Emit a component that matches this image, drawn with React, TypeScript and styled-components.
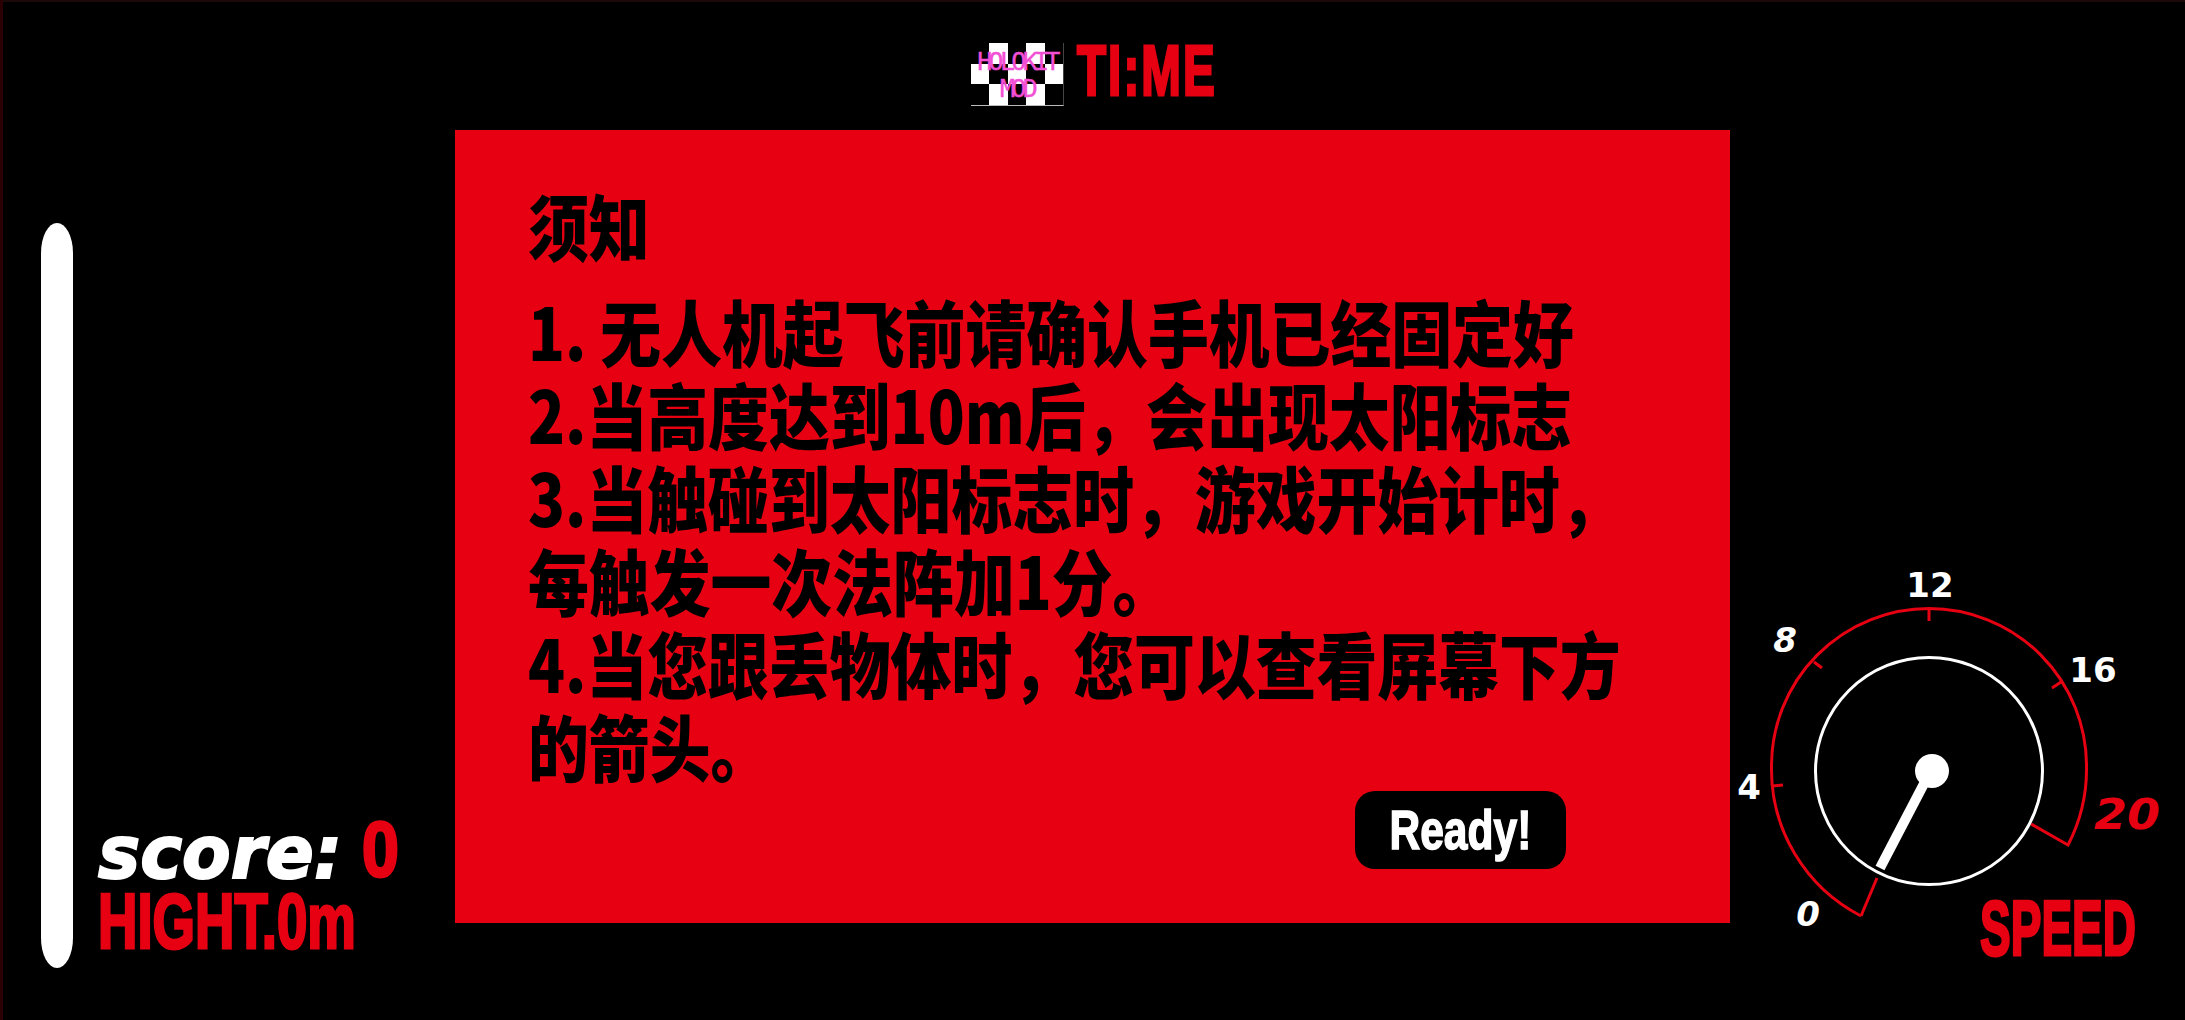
import React from "react";
import styled, { createGlobalStyle } from "styled-components";

const RED = "#e60012";

const GlobalStyle = createGlobalStyle`
  html, body {
    margin: 0;
    padding: 0;
    background: #000;
  }
`;

const Page = styled.main`
  width: 2185px;
  height: 1020px;
  background: #000;
  overflow: hidden;
  display: grid;
  grid-template-columns: 455px 1275px 455px;
  grid-template-rows: 130px 793px 97px;
  box-shadow: inset 3px 0 #2a0005, inset 0 2px #1c0a0a;
`;

const Header = styled.header`
  grid-column: 1 / 4;
  display: flex;
  justify-content: center;
  align-items: flex-start;
  padding: 43px 0 0 0;
  gap: 13px;
  transform: translateX(-1px);
`;

const Logo = styled.div`
  position: relative;
  width: 93px;
  height: 63px;
  display: grid;
  grid-template-columns: repeat(5, 1fr);
  grid-template-rows: repeat(3, 1fr);
  border-right: 1px solid #444;
  border-bottom: 1px solid #bbb;
  box-sizing: border-box;
`;

const Cell = styled.div<{ $white: boolean }>`
  background: ${({ $white }) => ($white ? "#fff" : "#000")};
`;

const LogoText = styled.div`
  position: absolute;
  top: 5px;
  left: 0;
  right: 0;
  text-align: center;
  color: #f24fd4;
  font: 25px/27px "DejaVu Sans Mono", monospace;
  -webkit-text-stroke: 0.4px #f24fd4;
  letter-spacing: -3.7px;
`;

const Time = styled.div`
  color: ${RED};
  font: 700 70px/56px "Liberation Sans", sans-serif;
  -webkit-text-stroke: 3px ${RED};
  letter-spacing: 3px;
  transform: scaleX(0.68);
  transform-origin: left top;
  width: 135px;
  white-space: nowrap;
`;

const LeftColumn = styled.aside`
  grid-row: 2 / 4;
  display: flex;
  align-items: flex-end;
  padding: 0 0 52px 41px;
  gap: 25px;
`;

const HeightBar = styled.div`
  width: 32px;
  height: 745px;
  border-radius: 16px / 30px;
  background: #fff;
  flex: none;
`;

const Stats = styled.div`
  display: flex;
  flex-direction: column;
  padding-bottom: 8px;
`;

const ScoreRow = styled.div`
  display: flex;
  align-items: center;
  height: 66px;
`;

const ScoreLabel = styled.span`
  color: #fff;
  font: italic 700 73px/1 "DejaVu Sans", sans-serif;
  -webkit-text-stroke: 2px #fff;
  transform: scaleX(0.97) translateY(3px);
  transform-origin: left center;
  width: 264px;
  white-space: nowrap;
`;

const CondensedRed = styled.span<{ $scale: number }>`
  color: ${RED};
  font: 700 78px/1 "Liberation Sans", sans-serif;
  -webkit-text-stroke: 3px ${RED};
  transform: scaleX(${({ $scale }) => $scale});
  transform-origin: left center;
  white-space: nowrap;
`;

const Panel = styled.section`
  grid-row: 2;
  background: ${RED};
  padding: 52px 0 0 73px;
  position: relative;
  display: flex;
  flex-direction: column;
`;

const NoticeText = styled.div`
  color: #000;
  font: 900 72px/83px "Noto Sans CJK SC", sans-serif;
  transform: scaleX(0.845);
  transform-origin: left top;
  white-space: nowrap;
`;

const Heading = styled(NoticeText)`
  margin-bottom: 23px;
`;

const Line = styled.div``;

const ReadyRow = styled.div`
  display: flex;
  justify-content: flex-end;
  padding-right: 164px;
  margin-top: 5px;
`;

const ReadyButton = styled.button`
  width: 211px;
  height: 78px;
  border: 0;
  border-radius: 20px;
  background: #000;
  color: #fff;
  padding: 0;
  cursor: pointer;
`;

const ReadyLabel = styled.span`
  display: inline-block;
  font: 700 56px/1 "Liberation Sans", sans-serif;
  -webkit-text-stroke: 1.5px #fff;
  transform: scaleX(0.76);
`;

const RightColumn = styled.aside`
  grid-row: 2 / 4;
  display: flex;
  flex-direction: column;
  justify-content: flex-end;
  align-items: flex-start;
  padding-bottom: 53px;
`;

const GaugeSvg = styled.svg`
  display: block;
  overflow: visible;
`;

const GaugeLabel = styled.text<{ $red?: boolean; $slant?: boolean }>`
  font: ${({ $slant }) => ($slant ? "italic" : "normal")} 700
    ${({ $red }) => ($red ? 42 : 34)}px "DejaVu Sans", sans-serif;
  fill: ${({ $red }) => ($red ? RED : "#fff")};
`;

const SpeedLabel = styled(CondensedRed)`
  margin: -41px 0 0 250px;
`;

const CELLS = [0, 1, 0, 1, 0, 1, 0, 1, 0, 1, 0, 1, 0, 1, 0];

const LINES = [
  "1. 无人机起飞前请确认手机已经固定好",
  "2.当高度达到10m后，会出现太阳标志",
  "3.当触碰到太阳标志时，游戏开始计时，",
  "每触发一次法阵加1分。",
  "4.当您跟丢物体时，您可以查看屏幕下方",
  "的箭头。",
];

const Gauge = () => (
  <GaugeSvg width={455} height={380} viewBox="0 0 455 380">
    {/* red outer arc, coordinates relative to x=1730 y=550 */}
    <path
      d="M131 366 A165 165 0 0 1 41.5 216 A157.5 157.5 0 0 1 356.5 216 A165 165 0 0 1 338 295 L301 274"
      fill="none"
      stroke={RED}
      strokeWidth={3}
    />
    <path d="M131 366 L147 328" fill="none" stroke={RED} strokeWidth={3} />
    <path
      d="M199 59 V71 M84 112 L92 118 M331 132 L322 138 M43 236 L53 235"
      stroke={RED}
      strokeWidth={3}
    />
    <circle cx={199} cy={221} r={113.5} fill="none" stroke="#fff" strokeWidth={3} />
    <path d="M198 226 L150 318" stroke="#fff" strokeWidth={10} />
    <circle cx={202} cy={221} r={17} fill="#fff" />
    <GaugeLabel x={200} y={47} textAnchor="middle">12</GaugeLabel>
    <GaugeLabel $slant x={55} y={102} textAnchor="middle">8</GaugeLabel>
    <GaugeLabel x={363} y={132} textAnchor="middle">16</GaugeLabel>
    <GaugeLabel x={19} y={249} textAnchor="middle">4</GaugeLabel>
    <GaugeLabel $slant x={78} y={376} textAnchor="middle">0</GaugeLabel>
    <GaugeLabel
      $red
      $slant
      x={397}
      y={279}
      textAnchor="middle"
      textLength={66}
      lengthAdjust="spacingAndGlyphs"
    >
      20
    </GaugeLabel>
  </GaugeSvg>
);

export default function App() {
  return (
    <Page>
      <GlobalStyle />
      <Header>
        <Logo>
          {CELLS.map((on, i) => (
            <Cell key={i} $white={on === 1} />
          ))}
          <LogoText>
            HOLOKIT
            <br />
            MOD
          </LogoText>
        </Logo>
        <Time>TI:ME</Time>
      </Header>
      <LeftColumn>
        <HeightBar />
        <Stats>
          <ScoreRow>
            <ScoreLabel>score:</ScoreLabel>
            <CondensedRed $scale={0.85}>0</CondensedRed>
          </ScoreRow>
          <CondensedRed $scale={0.7}>HIGHT.0m</CondensedRed>
        </Stats>
      </LeftColumn>
      <Panel>
        <Heading>须知</Heading>
        <NoticeText>
          {LINES.map((line) => (
            <Line key={line}>{line}</Line>
          ))}
        </NoticeText>
        <ReadyRow>
          <ReadyButton type="button">
            <ReadyLabel>Ready!</ReadyLabel>
          </ReadyButton>
        </ReadyRow>
      </Panel>
      <RightColumn>
        <Gauge />
        <SpeedLabel $scale={0.59}>SPEED</SpeedLabel>
      </RightColumn>
    </Page>
  );
}
